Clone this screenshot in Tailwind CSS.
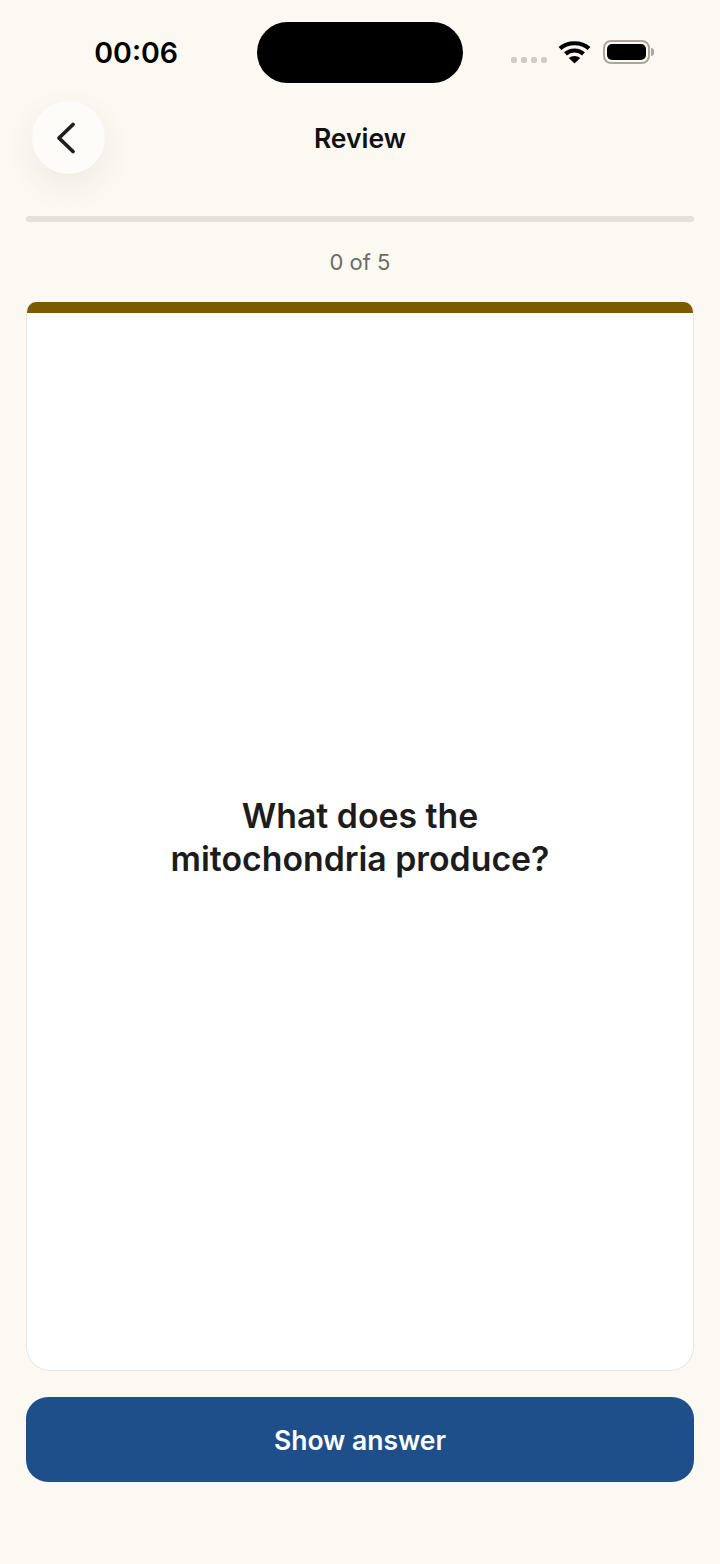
<!DOCTYPE html>
<html lang="en">
<head>
    <meta charset="UTF-8">
    <meta name="viewport" content="width=device-width, initial-scale=1.0">
    <title>Review</title>
    <script src="https://cdn.jsdelivr.net/npm/@tailwindcss/browser@4"></script>
</head>
<body class="bg-[#fbf9f2] h-[1564px] w-[720px] overflow-hidden flex flex-col font-['Inter',sans-serif]">

<!-- status bar -->
<div class="h-[101px] shrink-0 pt-[22px] flex items-start">
    <div class="w-[257px] h-[61px] flex items-center justify-end pr-[79px] pt-[2px] text-[28.5px] leading-none font-semibold text-black">00:06</div>
    <div class="w-[206px] h-[61px] bg-black rounded-full"></div>
    <div class="h-[61px] flex items-center pl-[48px]">
        <div class="flex gap-[4px] mt-[15px]">
            <span class="w-[6px] h-[6px] rounded-[2px] bg-[#cfccc6]"></span>
            <span class="w-[6px] h-[6px] rounded-[2px] bg-[#cfccc6]"></span>
            <span class="w-[6px] h-[6px] rounded-[2px] bg-[#cfccc6]"></span>
            <span class="w-[6px] h-[6px] rounded-[2px] bg-[#cfccc6]"></span>
        </div>
        <svg class="ml-[11px] -mt-[1px]" width="33" height="24" viewBox="0 0 33 24" fill="none">
            <path d="M2 8.5C9.5 1.5 23.5 1.5 31 8.5" stroke="#000" stroke-width="4.2"/>
            <path d="M7.5 13.8C12.5 9.4 20.5 9.4 25.5 13.8" stroke="#000" stroke-width="4.2"/>
            <path d="M16.5 23.5L10.8 18C14 15.2 19 15.2 22.2 18Z" fill="#000"/>
        </svg>
        <div class="ml-[12px] -mt-[1px] flex items-center">
            <div class="w-[47px] h-[24px] rounded-[8px] border-2 border-[#aaa79f] p-[2px]">
                <div class="w-full h-full rounded-[5px] bg-black"></div>
            </div>
            <div class="w-[3px] h-[8px] ml-[1px] rounded-r-full bg-[#aaa79f]"></div>
        </div>
    </div>
</div>

<!-- header -->
<div class="relative h-[73px] shrink-0 flex items-center justify-center">
    <div class="absolute left-[32px] top-0 w-[73px] h-[73px] rounded-full bg-[#fdfcf8] shadow-[0_12px_32px_rgba(60,50,30,0.07)] flex items-center justify-center">
        <svg class="-ml-[5px]" width="22" height="34" viewBox="0 0 22 34" fill="none">
            <path d="M18 3.5L4 17L18 30.5" stroke="#1f1f1f" stroke-width="3.8" stroke-linecap="round" stroke-linejoin="round"/>
        </svg>
    </div>
    <h1 class="text-[26.5px] leading-none font-[560] text-[#111111] pt-px">Review</h1>
</div>

<!-- progress -->
<div class="mx-[26px] mt-[42px] h-[6px] shrink-0 rounded-full bg-[#e4e1da]"></div>
<p class="mt-[26px] h-[28px] shrink-0 text-center text-[22px] leading-[28px] text-[#6d6b65]">0 of 5</p>

<!-- card -->
<div class="mx-[26px] mt-[26px] h-[1069px] shrink-0 flex flex-col rounded-t-[10px] rounded-b-[24px] overflow-hidden bg-white border border-[#e9e7e1] border-t-0">
    <div class="-mx-px h-[11px] shrink-0 bg-[#7c5a00]"></div>
    <div class="flex-1 flex items-center justify-center text-center pb-[9px]">
        <p class="text-[33.8px] leading-[43px] font-[580] text-[#1c1c1c]">What does the<br>mitochondria produce?</p>
    </div>
</div>

<!-- action -->
<button class="mx-[26px] mt-[26px] h-[85px] shrink-0 rounded-[22px] pt-[2px] bg-[#1f4f8b] text-white text-[26.5px] font-[560]">Show answer</button>

</body>
</html>
